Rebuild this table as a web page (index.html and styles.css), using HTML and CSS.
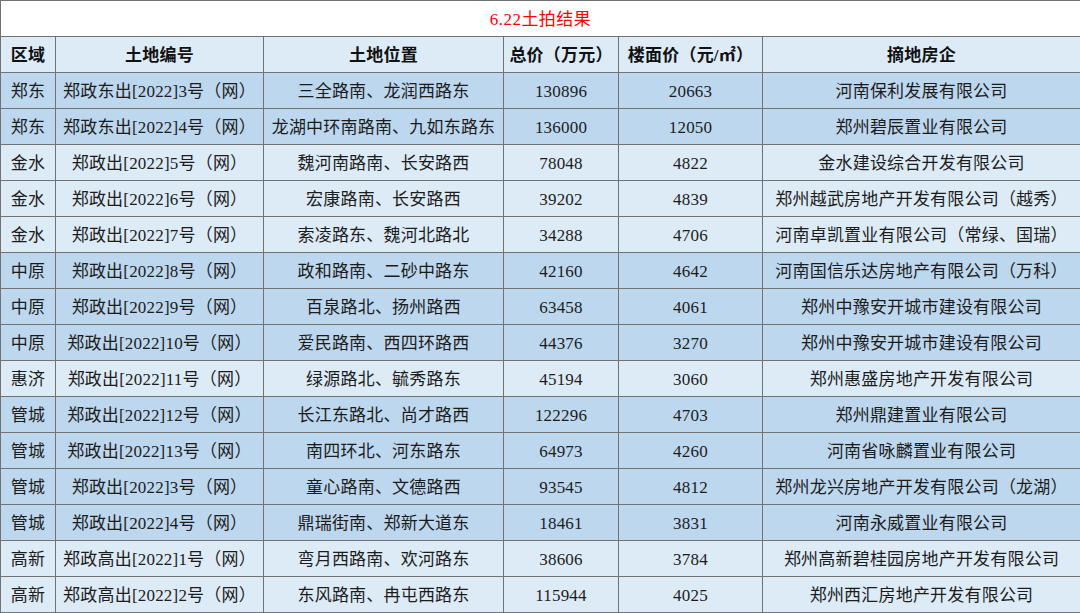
FILE: index.html
```html
<!DOCTYPE html>
<html lang="zh">
<head>
<meta charset="utf-8">
<link rel="stylesheet" href="styles.css">
</head>
<body>
<table class="land">
<colgroup>
<col class="c1"><col class="c2"><col class="c3"><col class="c4"><col class="c5"><col class="c6">
</colgroup>
<thead>
<tr class="title"><th colspan="6">6.22土拍结果</th></tr>
<tr class="head"><th>区域</th><th>土地编号</th><th>土地位置</th><th>总价（万元）</th><th>楼面价（元/㎡）</th><th>摘地房企</th></tr>
</thead>
<tbody>
<tr class="dark"><td>郑东</td><td>郑政东出[2022]3号（网）</td><td>三全路南、龙润西路东</td><td>130896</td><td>20663</td><td>河南保利发展有限公司</td></tr>
<tr class="dark"><td>郑东</td><td>郑政东出[2022]4号（网）</td><td>龙湖中环南路南、九如东路东</td><td>136000</td><td>12050</td><td>郑州碧辰置业有限公司</td></tr>
<tr class="light"><td>金水</td><td>郑政出[2022]5号（网）</td><td>魏河南路南、长安路西</td><td>78048</td><td>4822</td><td>金水建设综合开发有限公司</td></tr>
<tr class="light"><td>金水</td><td>郑政出[2022]6号（网）</td><td>宏康路南、长安路西</td><td>39202</td><td>4839</td><td>郑州越武房地产开发有限公司（越秀）</td></tr>
<tr class="light"><td>金水</td><td>郑政出[2022]7号（网）</td><td>索凌路东、魏河北路北</td><td>34288</td><td>4706</td><td>河南卓凯置业有限公司（常绿、国瑞）</td></tr>
<tr class="dark"><td>中原</td><td>郑政出[2022]8号（网）</td><td>政和路南、二砂中路东</td><td>42160</td><td>4642</td><td>河南国信乐达房地产有限公司（万科）</td></tr>
<tr class="dark"><td>中原</td><td>郑政出[2022]9号（网）</td><td>百泉路北、扬州路西</td><td>63458</td><td>4061</td><td>郑州中豫安开城市建设有限公司</td></tr>
<tr class="dark"><td>中原</td><td>郑政出[2022]10号（网）</td><td>爱民路南、西四环路西</td><td>44376</td><td>3270</td><td>郑州中豫安开城市建设有限公司</td></tr>
<tr class="light"><td>惠济</td><td>郑政出[2022]11号（网）</td><td>绿源路北、毓秀路东</td><td>45194</td><td>3060</td><td>郑州惠盛房地产开发有限公司</td></tr>
<tr class="dark"><td>管城</td><td>郑政出[2022]12号（网）</td><td>长江东路北、尚才路西</td><td>122296</td><td>4703</td><td>郑州鼎建置业有限公司</td></tr>
<tr class="dark"><td>管城</td><td>郑政出[2022]13号（网）</td><td>南四环北、河东路东</td><td>64973</td><td>4260</td><td>河南省咏麟置业有限公司</td></tr>
<tr class="dark"><td>管城</td><td>郑政出[2022]3号（网）</td><td>童心路南、文德路西</td><td>93545</td><td>4812</td><td>郑州龙兴房地产开发有限公司（龙湖）</td></tr>
<tr class="dark"><td>管城</td><td>郑政出[2022]4号（网）</td><td>鼎瑞街南、郑新大道东</td><td>18461</td><td>3831</td><td>河南永威置业有限公司</td></tr>
<tr class="light"><td>高新</td><td>郑政高出[2022]1号（网）</td><td>弯月西路南、欢河路东</td><td>38606</td><td>3784</td><td>郑州高新碧桂园房地产开发有限公司</td></tr>
<tr class="light"><td>高新</td><td>郑政高出[2022]2号（网）</td><td>东风路南、冉屯西路东</td><td>115944</td><td>4025</td><td>郑州西汇房地产开发有限公司</td></tr>
</tbody>
</table>
</body>
</html>
```
FILE: styles.css
```css
html, body {
  margin: 0;
  padding: 0;
  background: #ffffff;
}
body {
  font-family: "Liberation Serif", "Noto Sans CJK SC", serif;
  color: #1c1c1c;
}
.land {
  border-collapse: collapse;
  table-layout: fixed;
  width: 1080px;
  font-size: 17px;
}
.c1 { width: 55px; }
.c2 { width: 208px; }
.c3 { width: 240px; }
.c4 { width: 115px; }
.c5 { width: 144px; }
.c6 { width: 318px; }
.land th, .land td {
  border: 1px solid #727272;
  height: 33px;
  padding: 2px 0 0 0;
  text-align: center;
  vertical-align: middle;
  white-space: nowrap;
  overflow: hidden;
  line-height: 20px;
  letter-spacing: 0.2px;
}
.title th {
  background: #ffffff;
  color: #ff0000;
  font-weight: normal;
  font-size: 17px;
  letter-spacing: 0.5px;
}
.head th {
  background: #ddebf7;
  font-weight: bold;
  color: #111;
}
.dark td { background: #bdd7ee; }
.light td { background: #ddebf7; }
```
